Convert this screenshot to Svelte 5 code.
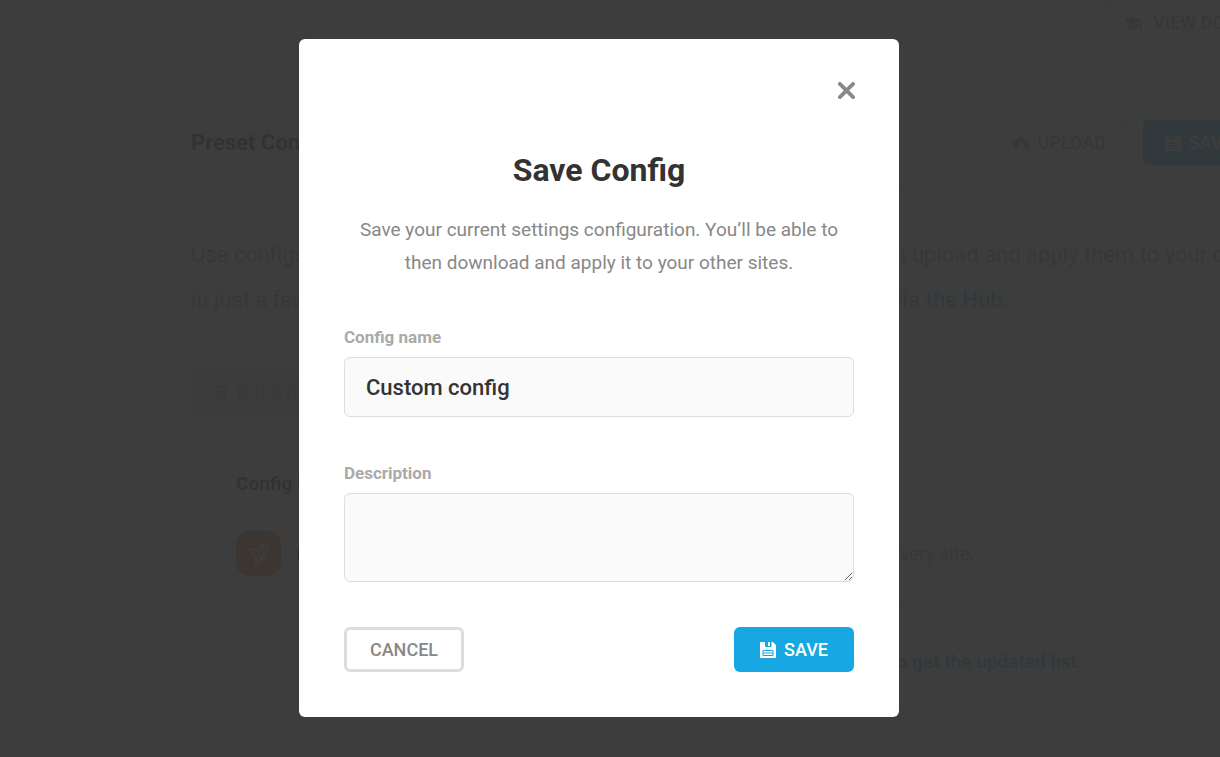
<script>
  let name = $state("Custom config");
  let description = $state("");
  let open = $state(true);

  const configs = [
    { id: 1, name: "Basic config", text: "Recommended performance config for every site." },
  ];

  function close() {
    open = false;
  }

  function onKeydown(e) {
    if (e.key === "Escape") close();
  }

  function onSubmit(e) {
    e.preventDefault();
    close();
  }
</script>

<svelte:window onkeydown={onKeydown} />

{#snippet floppy()}
  <svg class="icon" viewBox="0 0 16 16" aria-hidden="true">
    <path
      fill="currentColor"
      fill-rule="evenodd"
      d="M1 0h4v4c0 .6.4 1 1 1h4.500c.6 0 1-.4 1-1V0H13l3 3v12c0 .6-.4 1-1 1H1c-.6 0-1-.4-1-1V1c0-.6.4-1 1-1zM3.500 8c-.6 0-1 .4-1 1v4c0 .6.4 1 1 1h9c.6 0 1-.4 1-1V9c0-.6-.4-1-1-1z"
    />
    <path fill="currentColor" d="M8 0h2v4H8zM3.500 9h9v1.500h-9zM3.500 11.500h9V13h-9z" />
  </svg>
{/snippet}

<div class="page" inert={open}>
  <div class="page__inner">
    <header class="page__top">
      <a class="btn btn--ghost" href="#docs">
        <svg class="icon icon--wide" viewBox="0 0 18 16" aria-hidden="true">
          <path fill="currentColor" d="M9 1.500 0 5.500l9 4 7-3V10h-1v4h3v-4h-1V5.200zM3 8v4.500C4.500 14 6.600 14.500 9 14.500s4-.5 5-2V8.500l-5 2.300z" />
        </svg>
        View documentation
      </a>
    </header>

    <main class="box">
      <div class="box__header">
        <h1>Preset Configs</h1>
        <div class="actions">
          <button type="button" class="btn btn--ghost">
            <svg class="icon icon--wide" viewBox="0 0 18 16" aria-hidden="true">
              <path
                fill="currentColor"
                fill-rule="evenodd"
                d="M14.800 6.700A5.600 5.600 0 0 0 4 5.800 4.200 4.200 0 0 0 4.200 14H7v-2.500H5L9 6.800l4 4.700h-2V14h3.200a3.700 3.700 0 0 0 .6-7.300z"
              />
            </svg>
            Upload
          </button>
          <button type="button" class="btn btn--blue">
            {@render floppy()}
            Save new
          </button>
        </div>
      </div>

      <div class="box__body">
        <p class="intro">
          Use configs to save preset configurations of Hummingbird’s settings then upload and apply them to your other sites<br />
          in just a few clicks! You can easily apply configs to several sites at once via
          <a href="#hub">the Hub.</a>
        </p>

        <button type="button" class="btn btn--disabled" disabled>
          <svg class="icon" viewBox="0 0 16 18" aria-hidden="true">
            <path
              fill="currentColor"
              fill-rule="evenodd"
              d="M5.500 0h5l1 2H16v2.500H0V2h4.500zM1.500 5.500h13L13.400 18H2.600zM4.500 7.500l.5 8.500h1.200l-.4-8.500zm2.900 0V16h1.200V7.500zm2.900 0L9.800 16H11l.5-8.500z"
            />
          </svg>
          Bulk delete
        </button>

        <table>
          <thead>
            <tr>
              <th class="check"><input type="checkbox" aria-label="Select all configs" /></th>
              <th class="name" scope="col">Config Name</th>
              <th scope="col">Description</th>
            </tr>
          </thead>
          <tbody>
            {#each configs as config (config.id)}
              <tr>
                <td class="check"><input type="checkbox" aria-label={`Select ${config.name}`} /></td>
                <td class="name">
                  <div class="config">
                    <span class="badge">
                      <svg viewBox="0 0 24 22" aria-hidden="true">
                        <path
                          fill="none"
                          stroke="currentColor"
                          stroke-width="1.500"
                          stroke-linejoin="round"
                          d="M1 5l11 3.500 2-5C15 1 18 1 19 2.500l4 .5-3.500 1.500C20 10 18 14 14 17l-2 3.500H7.500L10 16l-3-.5 3.500-2.500C6 12 3 9 1 5zM12 8.500l1.500 4.500L12 20M16 4l1 4-3 8"
                        />
                      </svg>
                    </span>
                    {config.name}
                  </div>
                </td>
                <td>{config.text}</td>
              </tr>
            {/each}
          </tbody>
        </table>
      </div>

      <p class="box__footer">
        Created or updated the configs via the Hub?
        <a href="#refresh">Check again to get the updated list.</a>
      </p>
    </main>
  </div>
</div>

{#if open}
  <div class="overlay">
    <div class="modal" role="dialog" aria-modal="true" aria-labelledby="modal-title">
      <button type="button" class="modal__close" aria-label="Close" onclick={close}>
        <svg viewBox="0 0 18 18" aria-hidden="true">
          <path d="M2 2 16 16M16 2 2 16" />
        </svg>
      </button>

      <h2 id="modal-title">Save Config</h2>
      <p class="modal__text">
        Save your current settings configuration. You’ll be able to then download and apply it to
        your other sites.
      </p>

      <form onsubmit={onSubmit}>
        <div class="field">
          <label for="config-name">Config name</label>
          <input id="config-name" type="text" bind:value={name} />
        </div>
        <div class="field">
          <label for="config-description">Description</label>
          <textarea id="config-description" bind:value={description}></textarea>
        </div>
        <div class="modal__footer">
          <button type="button" class="btn btn--ghost" onclick={close}>Cancel</button>
          <button type="submit" class="btn btn--blue">
            {@render floppy()}
            Save
          </button>
        </div>
      </form>
    </div>
  </div>
{/if}

<style>
  :global(body) {
    background: #f1f1f1;
  }

  .page,
  .overlay {
    font-family: Roboto, "Liberation Sans", sans-serif;
    color: #888;
  }
  .page *,
  .overlay * {
    box-sizing: border-box;
  }

  h1,
  h2,
  p {
    margin: 0;
  }

  a {
    color: #17a8e3;
    font-weight: 500;
    text-decoration: none;
  }

  /* ---- buttons ---- */
  .btn {
    display: inline-flex;
    align-items: center;
    justify-content: center;
    gap: 8px;
    min-height: 45px;
    padding: 0 19px;
    border: 3px solid transparent;
    border-radius: 6px;
    background: transparent;
    color: #888;
    font: 500 18px/24px Roboto, "Liberation Sans", sans-serif;
    text-transform: uppercase;
    white-space: nowrap;
    cursor: pointer;
  }
  .btn--ghost {
    border-color: #ddd;
  }
  .btn--blue {
    background: #17a8e3;
    color: #fff;
  }
  .btn--disabled {
    background: #e6e6e6;
    color: #aaa;
    cursor: default;
  }

  .icon {
    width: 16px;
    height: 16px;
    flex: none;
  }
  .icon--wide {
    width: 18px;
  }

  /* ---- page behind the dialog ---- */
  .page {
    height: 100vh;
    padding-left: 146px;
    box-sizing: border-box;
    overflow: hidden;
  }
  .page__inner {
    min-width: 1197px;
  }
  .page__top {
    display: flex;
    justify-content: flex-end;
    margin: 0 -28px 52px 0;
  }
  .page__top .btn {
    gap: 11px;
  }
  .box {
    border-radius: 6px;
    background: #fff;
  }
  .box__header {
    display: flex;
    align-items: center;
    justify-content: space-between;
    padding: 23px 45px;
    border-bottom: 1px solid #e6e6e6;
  }
  .box__header h1 {
    color: #333;
    font-size: 22px;
    line-height: 45px;
    font-weight: 700;
  }
  .actions {
    display: flex;
    gap: 15px;
  }
  .box__body {
    padding: 43px 45px 0;
  }
  .intro {
    margin-bottom: 48px;
    font-size: 22px;
    line-height: 45px;
    white-space: nowrap;
  }

  table {
    width: 100%;
    margin-top: 45px;
    border-collapse: collapse;
    font-size: 19px;
    line-height: 30px;
    text-align: left;
  }
  th,
  td {
    padding: 0;
  }
  th {
    height: 48px;
    color: #333;
    font-weight: 700;
  }
  td {
    height: 92px;
    border-bottom: 1px solid #e6e6e6;
  }
  .check {
    width: 45px;
  }
  .check input {
    display: block;
    appearance: none;
    width: 24px;
    height: 24px;
    margin: 0;
    border: 1px solid #ddd;
    border-radius: 6px;
    background: #fafafa;
  }
  .name {
    width: 322px;
  }
  .config {
    display: flex;
    align-items: center;
    gap: 15px;
    color: #333;
    font-weight: 500;
  }
  .badge {
    display: grid;
    place-items: center;
    width: 45px;
    height: 45px;
    border-radius: 14px;
    background: #e4713a;
    color: #fff;
  }
  .badge svg {
    width: 24px;
    height: 22px;
  }
  .box__footer {
    padding: 44px 45px 45px;
    font-size: 19px;
    line-height: 33px;
    text-align: center;
  }
  .box__footer a {
    font-weight: 700;
  }

  /* ---- dialog ---- */
  .overlay {
    position: fixed;
    inset: 0;
    display: flex;
    align-items: center;
    justify-content: center;
    box-sizing: border-box;
    padding: 0 22px 1px 0; /* scrollbar gutter */
    background: rgba(51, 51, 51, 0.95);
  }
  .modal {
    position: relative;
    width: 100%;
    max-width: 600px;
    padding: 109px 45px 45px;
    border-radius: 6px;
    background: #fff;
  }
  .modal__close {
    position: absolute;
    top: 29px;
    right: 30px;
    display: grid;
    place-items: center;
    width: 45px;
    height: 45px;
    padding: 0;
    border: 0;
    background: none;
    color: #888;
    cursor: pointer;
  }
  .modal__close svg {
    width: 17px;
    height: 17px;
    fill: none;
    stroke: currentColor;
    stroke-width: 4;
    stroke-linecap: round;
  }
  .modal h2 {
    color: #333;
    font-size: 32px;
    line-height: 45px;
    font-weight: 700;
    text-align: center;
  }
  .modal__text {
    margin: 20px 0 47px;
    padding: 0 10px;
    font-size: 19px;
    line-height: 33px;
    text-align: center;
  }
  .field {
    display: flex;
    flex-direction: column;
    gap: 9px;
    margin-bottom: 45px;
  }
  .field label {
    color: #aaa;
    font-size: 17px;
    line-height: 22px;
    font-weight: 700;
  }
  .field input,
  .field textarea {
    display: block;
    width: 100%;
    margin: 0;
    padding: 14px 21px;
    border: 1px solid #ddd;
    border-radius: 6px;
    background: #fafafa;
    color: #333;
    font: 500 22px/30px Roboto, "Liberation Sans", sans-serif;
    outline: 0;
  }
  .field input {
    height: 60px;
  }
  .field textarea {
    height: 89px;
    resize: vertical;
  }
  .field input:focus,
  .field textarea:focus {
    border-color: #888;
  }
  .modal__footer {
    display: flex;
    justify-content: space-between;
  }
  .modal__footer .btn {
    min-width: 120px;
  }
</style>
